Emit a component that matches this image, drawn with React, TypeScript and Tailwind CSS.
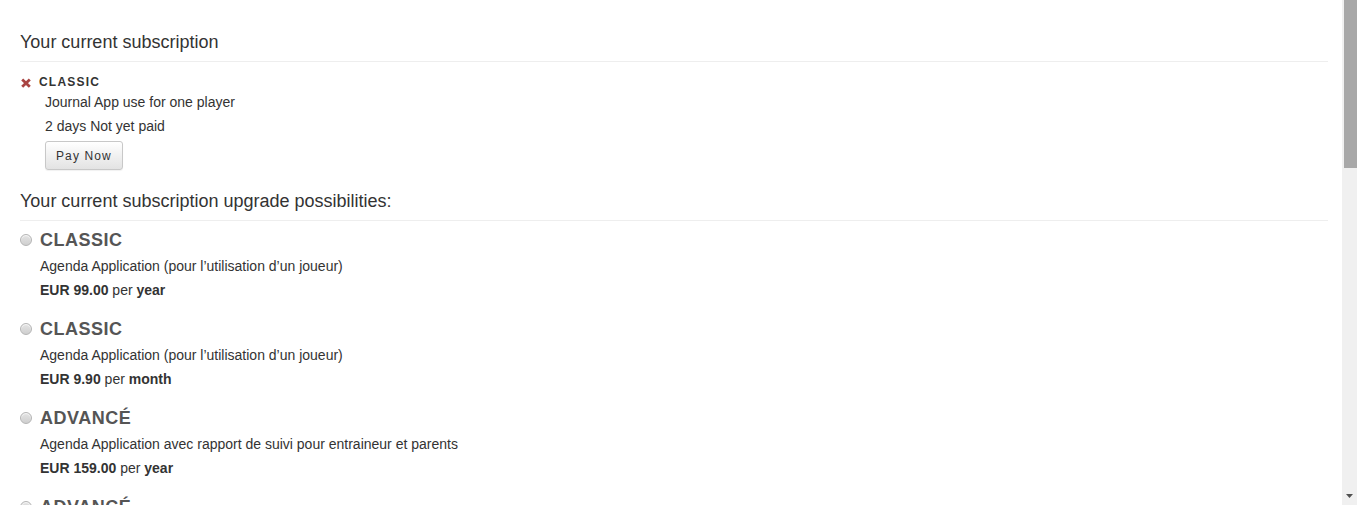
import React from "react";

const plans = [
  { name: "CLASSIC", desc: "Agenda Application (pour l’utilisation d’un joueur)", price: "EUR 99.00", period: "year" },
  { name: "CLASSIC", desc: "Agenda Application (pour l’utilisation d’un joueur)", price: "EUR 9.90", period: "month" },
  { name: "ADVANCÉ", desc: "Agenda Application avec rapport de suivi pour entraineur et parents", price: "EUR 159.00", period: "year" },
];

function Radio() {
  return (
    <span className="mr-[8px] inline-block h-[12px] w-[12px] shrink-0 rounded-full border border-[#b5b5b5] bg-gradient-to-b from-[#e4e4e4] to-[#cfcfcf] shadow-[inset_0_1px_1px_rgba(255,255,255,0.8)]" />
  );
}

export default function App() {
  return (
    <div className="flex h-[505px] w-full overflow-hidden bg-white font-['Liberation_Sans',Arial,sans-serif] text-[14px] text-[#333]">
      <div className="min-w-0 flex-1 pl-[20px] pr-[14px]">
        <h3 className="mt-[32px] border-b border-[#eee] pb-[9px] text-[18px] leading-[20px] font-normal text-[#333]">
          Your current subscription
        </h3>
        <div className="mt-[12px] flex items-center">
          <svg width="10" height="10" viewBox="0 0 10 10" className="ml-[1px] mr-[8px] mt-[2px]">
            <path d="M1.2 1.5 L8.8 8.8 M8.8 1.5 L1.2 8.8" stroke="#a94442" strokeWidth="2.8" strokeLinecap="butt" />
          </svg>
          <span className="text-[12px] leading-[16px] font-bold tracking-[1.2px] text-[#333]">CLASSIC</span>
        </div>
        <div className="pl-[25px]">
          <div className="leading-[24px]">Journal App use for one player</div>
          <div className="leading-[24px]">2 days Not yet paid</div>
          <button className="mt-[3px] h-[29px] rounded-[3px] border border-[#c8c8c8] bg-gradient-to-b from-[#ffffff] to-[#e3e3e3] px-[10px] text-[12px] leading-[16px] tracking-[1.1px] text-[#333] shadow-[0_1px_1px_rgba(0,0,0,0.06)]">
            Pay Now
          </button>
        </div>
        <h3 className="mt-[21px] border-b border-[#eee] pb-[9px] text-[18px] leading-[20px] font-normal text-[#333]">
          Your current subscription upgrade possibilities:
        </h3>
        <div className="mt-[8px] flex flex-col gap-[16px]">
          {plans.map((p, i) => (
            <div key={i}>
              <div className="flex items-center">
                <Radio />
                <span className="text-[18px] leading-[22px] font-bold tracking-[0.5px] text-[#555]">{p.name}</span>
              </div>
              <div className="mt-[3px] pl-[20px]">
                <div className="leading-[24px]">{p.desc}</div>
                <div className="leading-[24px]">
                  <b>{p.price}</b> per <b>{p.period}</b>
                </div>
              </div>
            </div>
          ))}
          <div className="flex h-[9px] items-start overflow-hidden">
            <div className="flex items-center">
              <Radio />
              <span className="text-[18px] leading-[22px] font-bold tracking-[0.5px] text-[#555]">ADVANCÉ</span>
            </div>
          </div>
        </div>
      </div>
      <div className="flex h-[505px] w-[15px] shrink-0 flex-col bg-[#f0f0f0]">
        <div className="ml-[2px] h-[168px] w-[13px] bg-[#a8a8a8]" />
        <div className="flex-1" />
        <div className="flex h-[15px] items-center justify-center pb-[2px]">
          <svg width="8" height="5" viewBox="0 0 8 5">
            <path d="M0 0 H7 L3.5 4 Z" fill="#505050" />
          </svg>
        </div>
      </div>
    </div>
  );
}
